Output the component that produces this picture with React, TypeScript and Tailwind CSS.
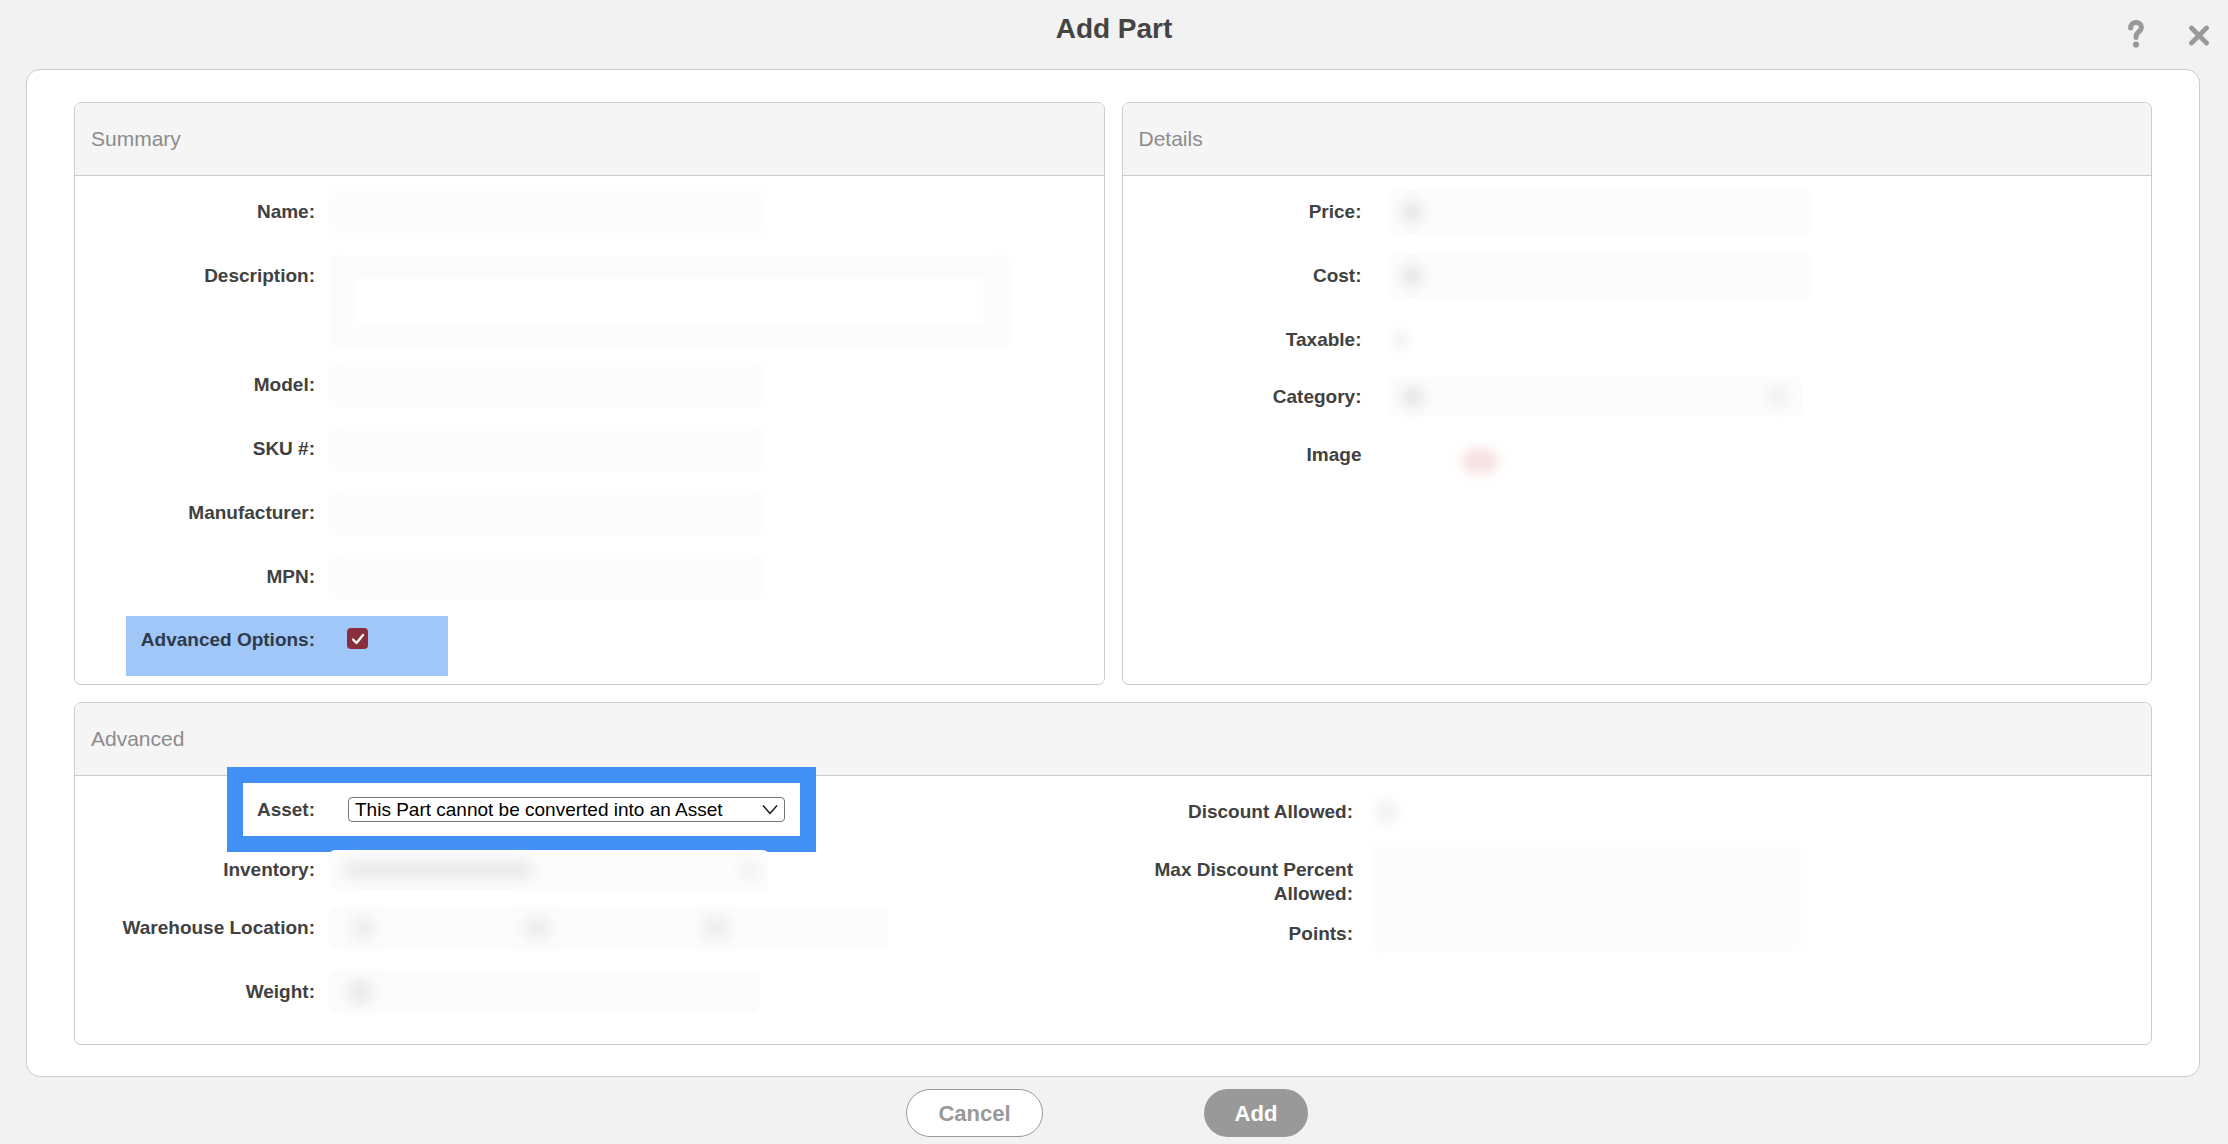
import React from "react";

function Label({ children, className = "" }: { children: React.ReactNode; className?: string }) {
  return (
    <div className={"shrink-0 text-right text-[19px] font-bold leading-[22px] text-[#414141] " + className}>
      {children}
    </div>
  );
}

function Faint({ className = "" }: { className?: string }) {
  return <div className={"shrink-0 rounded-md bg-[#fcfcfc] blur-[3px] " + className} />;
}

function Spot({ className = "" }: { className?: string }) {
  return <div className={"shrink-0 rounded-full blur-[6px] " + className} />;
}

function PanelHeader({ title }: { title: string }) {
  return (
    <div className="flex h-[73px] items-center border-b border-[#cccccc] bg-[#f5f5f5] pl-[16px] text-[21px] text-[#8c8c8c]">
      {title}
    </div>
  );
}

function Check() {
  return (
    <div className="flex h-[21px] w-[21px] items-center justify-center rounded-[4px] bg-[#8b2e3b]">
      <svg width="14" height="12" viewBox="0 0 14 12">
        <polyline points="2,6.5 5.5,10 12,2" fill="none" stroke="#ffffff" strokeWidth="2.4" strokeLinecap="round" strokeLinejoin="round" />
      </svg>
    </div>
  );
}

export default function App() {
  return (
    <div className="flex h-[1144px] w-[2228px] flex-col overflow-hidden bg-[#f2f2f2] font-['Liberation_Sans',Arial,Helvetica,sans-serif]">
      {/* Title bar */}
      <div className="grid h-[69px] shrink-0 grid-cols-[1fr_auto_1fr]">
        <div />
        <div className="pt-[13px] text-center text-[28px] font-bold leading-[32px] text-[#444444]">Add Part</div>
        <div className="flex items-start justify-end gap-[44px] pr-[18px] pt-[20px]">
          <svg width="16" height="28" viewBox="0 0 16 28">
            <path d="M2.6 8 C2.6 4.2 5 2.6 8 2.6 C11.2 2.6 13.4 4.4 13.4 7.3 C13.4 10.2 11.2 11.4 9.8 12.6 C8.5 13.8 8 14.6 8 17.6" fill="none" stroke="#999999" strokeWidth="5" strokeLinecap="round" />
            <circle cx="8" cy="24.6" r="3.1" fill="#999999" />
          </svg>
          <svg width="22" height="21" viewBox="0 0 22 21" className="mt-[5px]">
            <path d="M3.5 3 L18.5 18 M18.5 3 L3.5 18" stroke="#999999" strokeWidth="4.8" strokeLinecap="round" />
          </svg>
        </div>
      </div>

      {/* Modal */}
      <div className="ml-[26px] mr-[28px] flex h-[1008px] shrink-0 flex-col gap-[17px] rounded-[14px] border border-[#cccccc] bg-white px-[47px] pb-[32px] pt-[32px]">
        <div className="grid h-[583px] shrink-0 grid-cols-2 gap-[17px]">
          {/* Summary */}
          <div className="flex flex-col overflow-hidden rounded-[7px] border border-[#cccccc] bg-white">
            <PanelHeader title="Summary" />
            <div className="flex flex-col pt-[4px]">
              <div className="flex h-[64px] items-center">
                <Label className="w-[240px]">Name:</Label>
                <Faint className="ml-[14px] h-[44px] w-[437px]" />
              </div>
              <div className="flex h-[109px] items-start">
                <Label className="mt-[21px] w-[240px]">Description:</Label>
                <div className="ml-[14px] mt-[12px] flex h-[92px] w-[680px] shrink-0 items-center justify-center rounded-md bg-[#fbfbfb] blur-[3px]">
                  <div className="h-[48px] w-[630px] rounded bg-white" />
                </div>
              </div>
              <div className="flex h-[64px] items-center">
                <Label className="w-[240px]">Model:</Label>
                <Faint className="ml-[14px] h-[44px] w-[437px]" />
              </div>
              <div className="flex h-[64px] items-center">
                <Label className="w-[240px]">SKU #:</Label>
                <Faint className="ml-[14px] h-[44px] w-[437px]" />
              </div>
              <div className="flex h-[64px] items-center">
                <Label className="w-[240px]">Manufacturer:</Label>
                <Faint className="ml-[14px] h-[44px] w-[437px]" />
              </div>
              <div className="flex h-[64px] items-center">
                <Label className="w-[240px]">MPN:</Label>
                <Faint className="ml-[14px] h-[44px] w-[437px]" />
              </div>
              <div className="mt-[7px] flex pl-[51px]">
                <div className="flex h-[60px] w-[322px] items-start bg-[#a1c6f8] pt-[13px]">
                  <div className="w-[189px] shrink-0 text-right text-[19px] font-bold leading-[22px] text-[#2d3a4c]">Advanced Options:</div>
                  <div className="ml-[32px] -mt-[1px]">
                    <Check />
                  </div>
                </div>
              </div>
            </div>
          </div>

          {/* Details */}
          <div className="flex flex-col overflow-hidden rounded-[7px] border border-[#cccccc] bg-white">
            <PanelHeader title="Details" />
            <div className="flex flex-col pt-[4px]">
              <div className="flex h-[64px] items-center">
                <Label className="w-[239px]">Price:</Label>
                <div className="ml-[25px] flex h-[44px] w-[425px] shrink-0 items-center rounded-md bg-[#fcfcfc]">
                  <Spot className="ml-[14px] h-[24px] w-[22px] bg-[#e8e8e8]" />
                </div>
              </div>
              <div className="flex h-[64px] items-center">
                <Label className="w-[239px]">Cost:</Label>
                <div className="ml-[25px] flex h-[44px] w-[425px] shrink-0 items-center rounded-md bg-[#fcfcfc]">
                  <Spot className="ml-[14px] h-[24px] w-[22px] bg-[#e8e8e8]" />
                </div>
              </div>
              <div className="flex h-[64px] items-center">
                <Label className="w-[239px]">Taxable:</Label>
                <Spot className="ml-[30px] h-[20px] w-[18px] bg-[#f3f3f3]" />
              </div>
              <div className="flex h-[50px] items-center">
                <Label className="w-[239px]">Category:</Label>
                <div className="ml-[25px] flex h-[40px] w-[415px] shrink-0 items-center justify-between rounded-md bg-[#fcfcfc]">
                  <Spot className="ml-[14px] h-[22px] w-[24px] bg-[#e8e8e8]" />
                  <Spot className="mr-[14px] h-[20px] w-[20px] bg-[#f0f0f0]" />
                </div>
              </div>
              <div className="flex h-[66px] items-center">
                <Label className="w-[239px]">Image</Label>
                <Spot className="ml-[100px] mt-[12px] h-[24px] w-[36px] bg-[#f7e0e0]" />
              </div>
            </div>
          </div>
        </div>

        {/* Advanced */}
        <div className="flex h-[343px] shrink-0 flex-col overflow-hidden rounded-[7px] border border-[#cccccc] bg-white">
          <PanelHeader title="Advanced" />
          <div className="grid grid-cols-2">
            <div className="flex flex-col">
              <div className="-mt-[9px] ml-[152px] flex h-[85px] w-[589px] items-center border-[16px] border-[#4390f5] bg-white">
                <div className="w-[72px] shrink-0 text-right text-[19px] font-bold leading-[22px] text-[#414141]">Asset:</div>
                <div className="ml-[33px] flex h-[25px] w-[437px] shrink-0 items-center justify-between rounded-[4px] border border-[#767676] bg-white pl-[6px] pr-[6px] text-[19px] leading-[22px] text-black">
                  <span>This Part cannot be converted into an Asset</span>
                  <svg width="16" height="11" viewBox="0 0 16 11">
                    <polyline points="1,1.5 8,9.5 15,1.5" fill="none" stroke="#111111" strokeWidth="1.4" />
                  </svg>
                </div>
              </div>
              <div className="flex h-[36px] items-center">
                <Label className="w-[240px]">Inventory:</Label>
                <div className="ml-[14px] flex h-[40px] w-[440px] shrink-0 items-center justify-between rounded-md bg-[#fcfcfc]">
                  <Spot className="ml-[14px] h-[20px] w-[190px] bg-[#ebebeb]" />
                  <Spot className="mr-[10px] h-[20px] w-[20px] bg-[#f2f2f2]" />
                </div>
              </div>
              <div className="flex h-[80px] items-center">
                <Label className="w-[240px]">Warehouse Location:</Label>
                <div className="ml-[14px] flex h-[44px] w-[560px] shrink-0 items-center rounded-md bg-[#fcfcfc]">
                  <Spot className="ml-[22px] h-[24px] w-[24px] bg-[#eeeeee]" />
                  <Spot className="ml-[148px] h-[24px] w-[28px] bg-[#eeeeee]" />
                  <Spot className="ml-[150px] h-[24px] w-[30px] bg-[#eeeeee]" />
                </div>
              </div>
              <div className="flex h-[48px] items-center">
                <Label className="w-[240px]">Weight:</Label>
                <div className="ml-[14px] flex h-[44px] w-[430px] shrink-0 items-center rounded-md bg-[#fcfcfc]">
                  <Spot className="ml-[18px] h-[26px] w-[26px] bg-[#eaeaea]" />
                </div>
              </div>
            </div>

            <div className="flex flex-col pt-[12px]">
              <div className="flex h-[48px] items-center">
                <Label className="w-[240px]">Discount Allowed:</Label>
                <Spot className="ml-[22px] h-[24px] w-[22px] bg-[#f2f2f2]" />
              </div>
              <div className="flex h-[74px] items-start">
                <div className="mt-[22px] w-[240px] shrink-0 text-right text-[19px] font-bold leading-[24px] text-[#414141]">
                  Max Discount Percent
                  <br />
                  Allowed:
                </div>
                <Faint className="ml-[18px] mt-[6px] h-[110px] w-[430px]" />
              </div>
              <div className="flex h-[48px] items-center">
                <Label className="w-[240px]">Points:</Label>
              </div>
            </div>
          </div>
        </div>
      </div>

      {/* Buttons */}
      <div className="mt-[12px] flex justify-center gap-[161px] pr-[14px]">
        <div className="flex h-[48px] w-[137px] items-center justify-center rounded-full border border-[#999999] bg-white text-[22px] font-bold text-[#999999]">
          Cancel
        </div>
        <div className="flex h-[48px] w-[104px] items-center justify-center rounded-full bg-[#999999] text-[22px] font-bold text-white">
          Add
        </div>
      </div>
    </div>
  );
}
